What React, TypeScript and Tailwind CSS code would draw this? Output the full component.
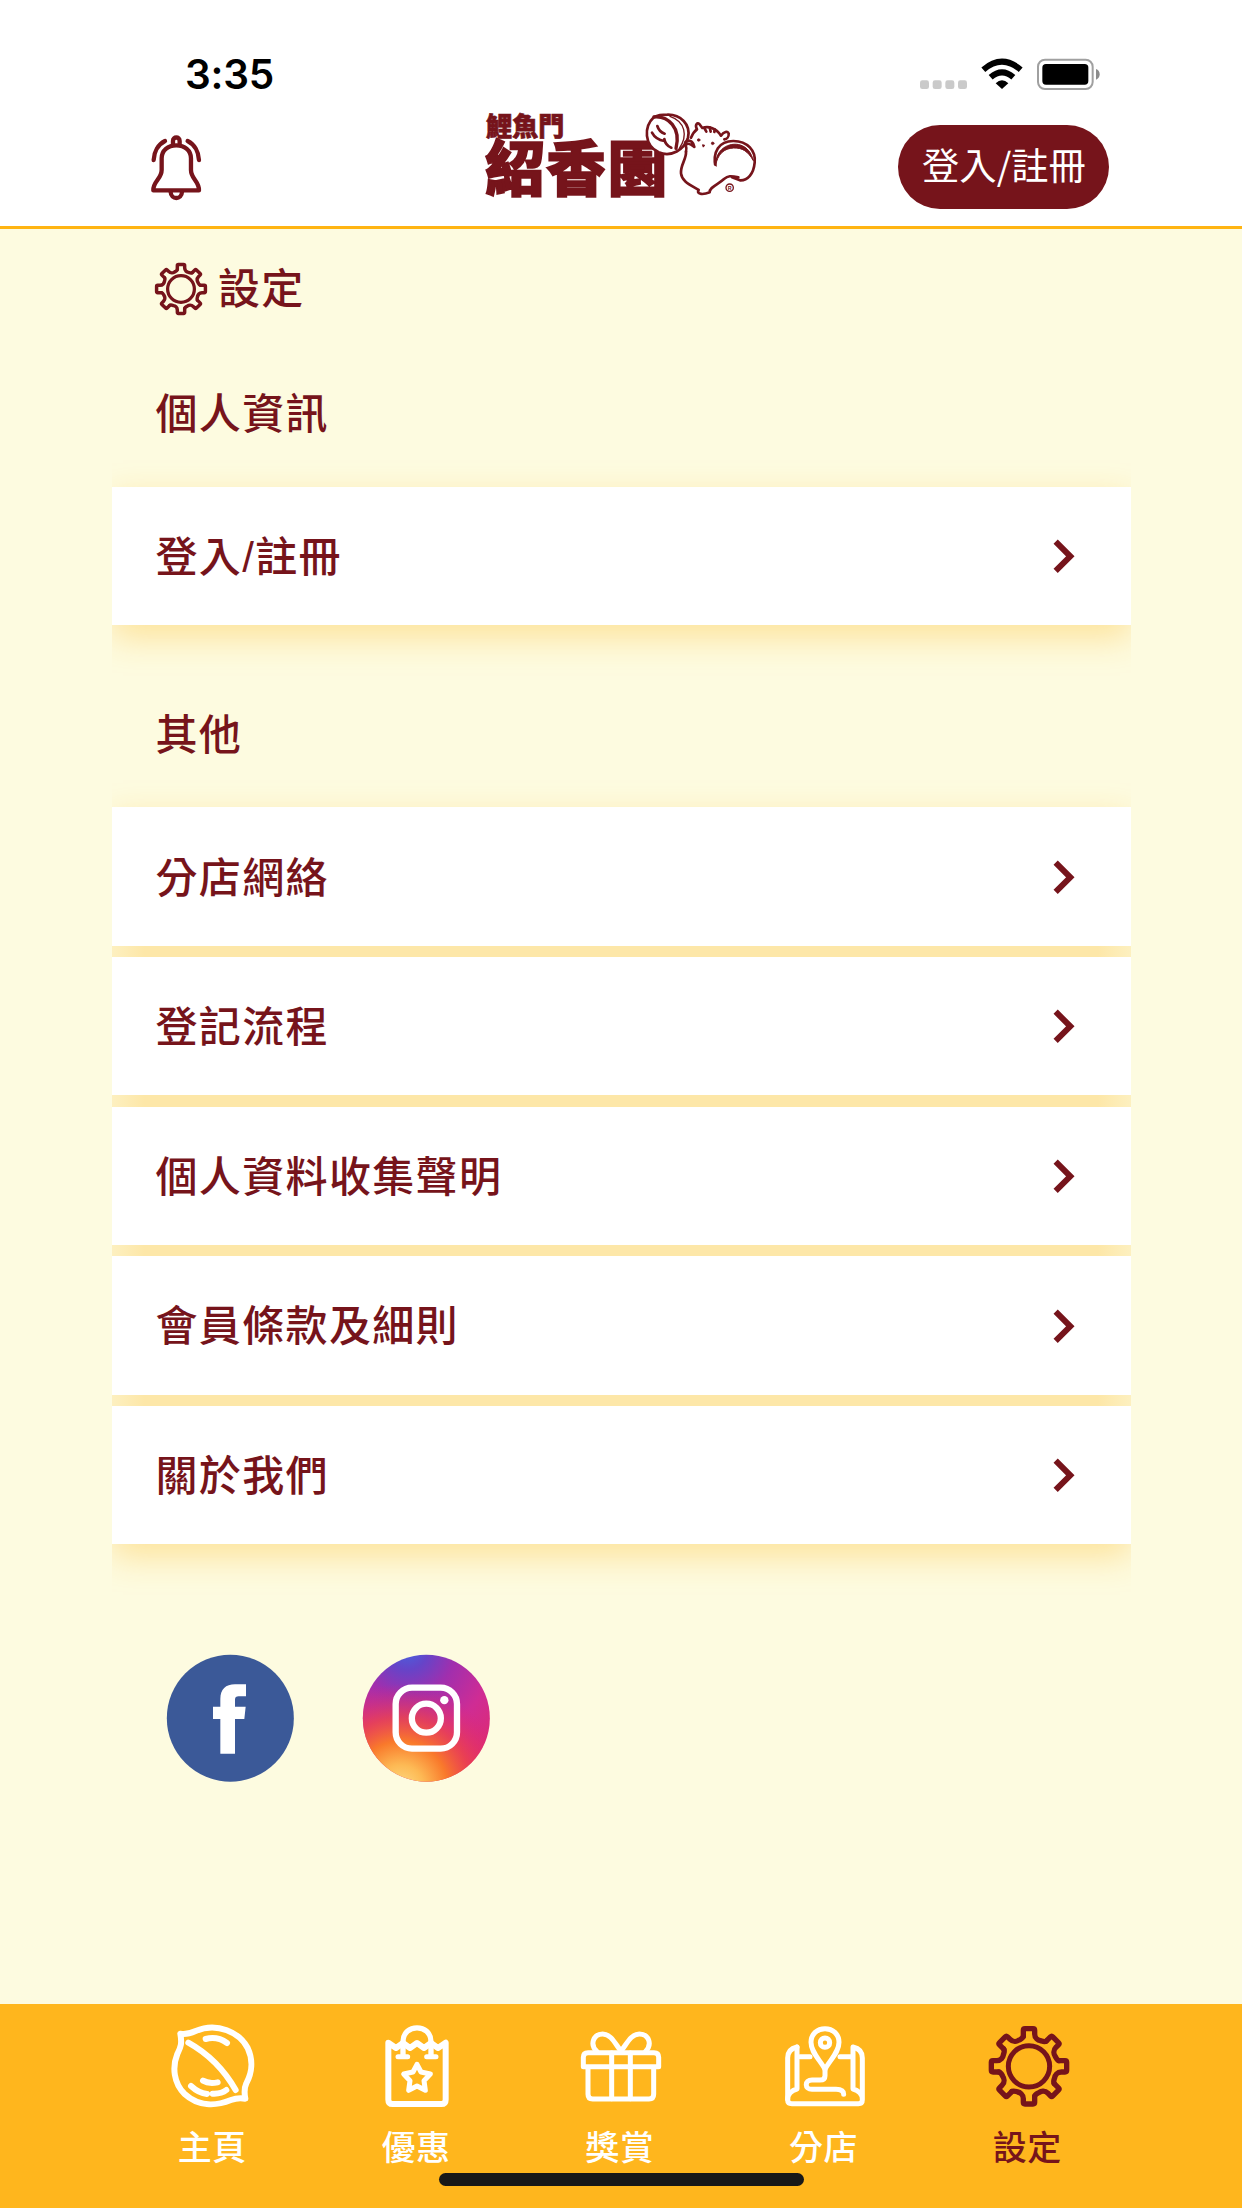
import type { ReactNode } from "react";

const otherLinks = [
  "分店網絡",
  "登記流程",
  "個人資料收集聲明",
  "會員條款及細則",
  "關於我們",
];

const teeth = [0, 45, 90, 135, 180, 225, 270, 315];

function Gear() {
  return (
    <g
      transform="translate(509 230)"
      fill="none"
      stroke="#76141b"
      strokeWidth="16"
      strokeLinecap="round"
      strokeLinejoin="round"
    >
      <circle r="62" strokeWidth="15" />
      {teeth.map((deg) => (
        <path
          key={deg}
          transform={`rotate(${deg})`}
          d="M-17 -90V-108Q-17 -113 -12 -113H12Q17 -113 17 -108V-97C17 -84 28 -78 34 -77C41 -75 46 -72 51.6 -75.7"
        />
      ))}
    </g>
  );
}

function Bell() {
  return (
    <svg className="mt-[38px] ml-[38px] h-[70px] w-[53.3px]" viewBox="60 310 160 210">
      <g fill="none" stroke="#76141b" strokeWidth="13" strokeLinecap="round" strokeLinejoin="round">
        <path d="M70 482C69 455 95 448 95 421V386C95 362 114 347 139 347C164 347 183 362 183 386V421C183 448 208 455 207 482Z" />
        <path d="M129 343V334C129 320 149 320 149 334V343" />
        <path d="M122 487C123 511 155 511 156 487" />
        <path d="M71 391C72 366 85 344 105 334" />
        <path d="M207 391C206 366 193 344 173 334" />
      </g>
    </svg>
  );
}

function Logo() {
  return (
    <svg className="ml-[266.7px] h-[120px] w-[300px]" viewBox="0 0 900 360">
      <g
        fill="#76141b"
        stroke="#76141b"
        fontFamily="'Noto Sans CJK TC', sans-serif"
        fontWeight="900"
      >
        <text x="48 127 205" y="122" fontSize="78" strokeWidth="2">
          鯉魚門
        </text>
        <text x="45 229 413" y="288" fontSize="179" strokeWidth="5">
          紹香園
        </text>
      </g>
      <g fill="#fff" stroke="#76141b" strokeWidth="8" strokeLinecap="round" strokeLinejoin="round">
        {/* walnut */}
        <path d="M552 66C520 96 523 152 566 172C604 188 643 164 654 128C663 88 631 58 592 59C577 59 563 61 552 66Z" />
        <path d="M552 66C594 62 634 98 618 160" fill="none" strokeWidth="10" />
        <path d="M600 64C646 80 654 122 628 160" fill="none" strokeWidth="4" />
        <path d="M562 93Q567 110 584 116M546 113Q557 134 583 138M583 132Q586 151 604 158" fill="none" strokeWidth="8" />
        {/* tail */}
        <path d="M737 220C726 169 748 138 790 138C833 138 858 168 854 203C851 237 833 257 810 256L786 247" />
        <path d="M737 212C735 162 778 140 811 150C832 157 844 173 850 197C834 169 817 158 791 159C762 160 742 178 737 212Z" fill="#76141b" strokeWidth="3" />
        {/* body */}
        <path d="M648 170C650 191 631 210 633 235C636 260 660 269 686 285C678 300 702 299 719 292C717 277 745 268 762 252C774 242 782 242 805 247" />
        <path d="M648 170C654 151 637 142 651 138C662 134 671 143 673 156C662 147 655 145 651 147" fill="none" />
        <path d="M663 128C668 116 674 108 681 103C674 90 681 81 688 87L697 99C716 92 739 100 753 122C760 112 775 105 776 117C777 126 770 132 763 133" />
        <path d="M703 99L709 110M719 97L722 110M734 103L733 111" fill="none" strokeWidth="8" />
        <circle cx="686" cy="135" r="4" fill="#76141b" strokeWidth="2" />
        <circle cx="728" cy="145" r="4" fill="#76141b" strokeWidth="2" />
        <path d="M698 150L703 151L700 155Z" strokeWidth="4" />
        <circle cx="779" cy="278" r="11" strokeWidth="4" />
      </g>
      <text x="773" y="284" fontSize="16" fontWeight="700" fill="#76141b" fontFamily="'Liberation Sans', sans-serif">
        R
      </text>
    </svg>
  );
}

function StatusBar() {
  return (
    <div className="flex h-[95px] pt-[55px]">
      <span className="ml-[185px] w-[100px] font-[Inter] text-[40.5px] leading-[40px] font-semibold tracking-[-0.2px] text-black">
        3:35
      </span>
      <svg className="ml-[625px] h-[40px] w-[200px]" viewBox="90 75 600 120">
        <g fill="#cacaca">
          <rect x="120" y="151" width="27" height="26" rx="7" />
          <rect x="158" y="151" width="27" height="26" rx="7" />
          <rect x="196" y="151" width="27" height="26" rx="7" />
          <rect x="234" y="151" width="27" height="26" rx="7" />
        </g>
        <g fill="none" stroke="#000" strokeWidth="18">
          <path d="M310 119Q366 71 422 119" />
          <path d="M332 142Q366 112 400 142" />
        </g>
        <path d="M347 160Q366 142 385 160L366 177Z" />
        <rect x="474" y="89" width="164" height="88" rx="21" fill="none" stroke="#a0a0a0" strokeWidth="6" />
        <rect x="487" y="102" width="138" height="62" rx="11" />
        <path d="M648 117Q659 121 659 133Q659 145 648 149Z" fill="#8c8c8c" />
      </svg>
    </div>
  );
}

function Row({ label }: { label: string }) {
  return (
    <div className="flex h-[138.4px] items-center justify-between bg-white pr-[55.5px] pl-[44px]">
      <span className="pt-[4px]">{label}</span>
      <svg className="mt-px h-[36.7px] w-[23.3px]" viewBox="305 205 70 110">
        <path d="M316 216L360 260L316 304" fill="none" stroke="#76141b" strokeWidth="18" />
      </svg>
    </div>
  );
}

function List({ items }: { items: string[] }) {
  return (
    <div className="flex flex-col gap-[11.2px] bg-[linear-gradient(to_right,#fdf0c0,#fde7a8_32px,#fde7a8_986px,#fdf0c0)] shadow-[0_12px_32px_rgba(255,182,29,0.36)]">
      {items.map((label) => (
        <Row key={label} label={label} />
      ))}
    </div>
  );
}

function Tab({ label, viewBox, active, children }: { label: string; viewBox: string; active?: boolean; children: ReactNode }) {
  return (
    <div className={active ? "flex-1 text-[#76141b]" : "flex-1 text-white"}>
      <svg
        className="mx-auto mt-[19.3px] h-[86px] w-[90px]"
        viewBox={viewBox}
        fill="none"
        stroke="currentColor"
        strokeWidth="18"
        strokeLinecap="round"
        strokeLinejoin="round"
      >
        {children}
      </svg>
      <p className="mt-[19px] pr-[2.5px] text-center text-[34px] leading-[40px] font-medium tracking-[0.5px]">{label}</p>
    </div>
  );
}

export default function App() {
  return (
    <div className="flex h-[2208px] w-[1242px] flex-col overflow-hidden bg-[#fdfbe0] font-['Liberation_Sans','Noto_Sans_CJK_TC',sans-serif] text-[#76141b]">
      <header className="h-[228.600px] border-b-[3px] border-[#ffb412] bg-white">
        <StatusBar />
        <div className="mx-auto flex w-[1018px] items-start">
          <Bell />
          <Logo />
          <button className="mt-[30px] ml-[128.500px] h-[84px] w-[211px] rounded-full bg-[#76141b] pb-[6px] font-['Noto_Sans_CJK_JP',sans-serif] text-[37.3px] leading-[78px] font-normal whitespace-nowrap text-white">
            登入/註冊
          </button>
        </div>
      </header>

      <main className="mx-auto w-[1019px] flex-1 overflow-hidden text-[42px] leading-[60px] font-medium tracking-[1.35px]">
        <div className="flex h-[120px] items-center pl-[42.500px]">
          <svg className="mr-[10px] h-[54px] w-[54px]" viewBox="384 105 250 250">
            <Gear />
          </svg>
          <h1 className="pt-[2px]">設定</h1>
        </div>
        <h2 className="flex h-[138.3px] items-center pb-[5px] pl-[44px]">個人資訊</h2>
        <List items={["登入/註冊"]} />
        <h2 className="flex h-[182.2px] items-center pt-[40px] pl-[44px]">其他</h2>
        <List items={otherLinks} />
        <div className="mt-[110px] flex gap-[66.8px] pl-[54.800px]">
          <svg className="size-[129px]" viewBox="80 73 387 387">
            <circle cx="273" cy="265.500" r="190.500" fill="#3b5998" />
            <path d="M243 372V268H221V231H243V208C243 179 259 164 287 164H320V200H298Q287 200 287 210V231H319L315 268H287V372Z" fill="#fff" />
          </svg>
          <svg className="size-[129px]" viewBox="667 73 387 387">
            <defs>
              <radialGradient id="igTop" cx="0.35" cy="-0.05" r="1.05">
                <stop offset="0" stopColor="#4464e0" />
                <stop offset="0.16" stopColor="#6644c8" />
                <stop offset="0.36" stopColor="#a02fae" />
                <stop offset="0.65" stopColor="#cf2c94" />
                <stop offset="1" stopColor="#e02a6c" />
              </radialGradient>
              <radialGradient id="igBottom" cx="0.3" cy="1.05" r="0.82">
                <stop offset="0" stopColor="#fedc86" />
                <stop offset="0.22" stopColor="#fdba55" />
                <stop offset="0.45" stopColor="#f9792b" />
                <stop offset="0.68" stopColor="#ee4648" stopOpacity="0.75" />
                <stop offset="1" stopColor="#e02672" stopOpacity="0" />
              </radialGradient>
            </defs>
            <circle cx="860" cy="265.500" r="190.500" fill="url(#igTop)" />
            <circle cx="860" cy="265.500" r="190.500" fill="url(#igBottom)" />
            <g fill="none" stroke="#fff" strokeWidth="19">
              <rect x="768" y="174" width="184" height="183" rx="49" />
              <circle cx="860" cy="265.500" r="43.500" />
            </g>
            <circle cx="914" cy="211.500" r="12.500" fill="#fff" />
          </svg>
        </div>
      </main>

      <nav className="relative h-[204px] bg-[#ffb61d]">
        <div className="mx-auto flex w-[1019px]">
          <Tab label="主頁" viewBox="87 100 270 258">
            <path d="M124 132C139 135 154 131 170 124C235 96 302 129 326 175C343 211 339 250 322 281C316 294 315 307 319 327C301 324 289 326 276 331C229 350 177 350 137 313C104 281 99 232 115 193C124 174 130 164 124 132Z" />
            <path d="M148 159C211 194 254 238 290 301" />
            <path d="M200 148C223 142 247 148 264 160" />
            <path d="M192 273C205 281 219 281 236 278" />
            <path d="M156 289C170 302 186 311 204 313M221 312C239 313 252 309 262 301" />
          </Tab>
          <Tab label="優惠" viewBox="697 100 270 258">
            <path d="M746 159L769 175L790 160L811 175L832 160L853 175L874 160L895 175L918 159V330Q918 343 905 343H759Q746 343 746 330Z" />
            <path d="M790 200V156C790 101 874 101 874 156V200" strokeWidth="16" />
            <path d="M775 201H804M861 201H889" strokeWidth="15" />
            <path d="M832 224L844 247L872 253L853 273L857 302L832 289L807 302L811 273L792 253L820 247Z" strokeWidth="15" />
          </Tab>
          <Tab label="獎賞" viewBox="110 100 270 258">
            <g strokeWidth="15">
              <path d="M146 189H344Q358 189 358 203V231H132V203Q132 189 146 189Z" />
              <path d="M146 234V314Q146 328 160 328H329Q343 328 343 314V234" />
              <path d="M217 190V327M273 190V327" />
              <path d="M173 186C149 163 164 133 190 133C216 133 228 164 245 184C262 164 274 133 300 133C327 133 341 163 318 186" />
            </g>
          </Tab>
          <Tab label="分店" viewBox="721 100 270 258">
            <g strokeWidth="15">
              <path d="M772 172C754 176 744 188 744 205V330Q744 342 757 342H956Q968 342 968 330V205C968 188 958 176 940 172V298C956 302 968 313 968 329" />
              <path d="M772 172V298C756 302 744 313 744 329" />
              <path d="M781 201H811M901 201H935" />
              <path d="M856 239C841 210 814 189 814 158C814 133 833 117 856 117C879 117 898 133 898 158C898 189 871 210 856 239Z" />
              <circle cx="856" cy="159" r="14" />
              <path d="M856 239V258Q856 271 841 271H817C794 271 794 299 817 299H889Q912 299 912 314" />
            </g>
          </Tab>
          <Tab label="設定" viewBox="374 100 270 258" active>
            <Gear />
          </Tab>
        </div>
        {/* home indicator */}
        <div className="absolute bottom-[22px] left-[439px] h-[13.500px] w-[364.500px] rounded-full bg-[#181818]" />
      </nav>
    </div>
  );
}
